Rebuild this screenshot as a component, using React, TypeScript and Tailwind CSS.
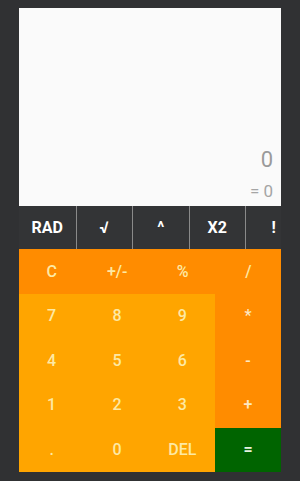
const sci = ["RAD", "√", "^", "X2", "!"];
const top = ["C", "+/-", "%", "/"];
const nums = ["7", "8", "9", "4", "5", "6", "1", "2", "3", ".", "0", "DEL"];
const ops = ["*", "-", "+"];

export default function App() {
  return (
    <div className="w-[300px] h-[481px] bg-[#303133] pt-2 pl-[19px] font-['Roboto',sans-serif]">
      <div className="w-[262px]">
        <div className="h-[198px] bg-[#fafafa] flex flex-col justify-end items-end pr-[8px] pb-[6px]">
          <div className="text-[22px] leading-none text-[#9a9a9a]">0</div>
          <div className="text-[17px] leading-none text-[#a5a5a5] mt-[12px]">= 0</div>
        </div>
        <div className="h-[43px] bg-[#333436] flex overflow-hidden">
          {sci.map((s, i) => (
            <div
              key={s}
              className={`shrink-0 w-[56.5px] flex items-center justify-center text-white font-bold text-[16px] ${
                i > 0 ? "border-l border-[#8a8a8a]" : ""
              }`}
            >
              {s}
            </div>
          ))}
        </div>
        <div className="h-[45px] bg-[#ff8c00] grid grid-cols-4 text-[16px] font-medium text-[#fde9a4]">
          {top.map((t) => (
            <div key={t} className="flex items-center justify-center">
              {t}
            </div>
          ))}
        </div>
        <div className="flex h-[178px]">
          <div className="w-[196px] bg-[#ffa500] grid grid-cols-3 grid-rows-4 text-[16px] font-medium text-[#fde9a4]">
            {nums.map((n) => (
              <div key={n} className="flex items-center justify-center">
                {n}
              </div>
            ))}
          </div>
          <div className="flex-1 flex flex-col">
            {ops.map((o) => (
              <div key={o} className="h-[44.5px] bg-[#ff8c00] flex items-center justify-center text-[16px] font-medium text-[#fde9c4]">
                {o}
              </div>
            ))}
            <div className="flex-1 bg-[#006400] flex items-center justify-center text-[16px] font-bold text-[#e6f2e0]">
              =
            </div>
          </div>
        </div>
      </div>
    </div>
  );
}
